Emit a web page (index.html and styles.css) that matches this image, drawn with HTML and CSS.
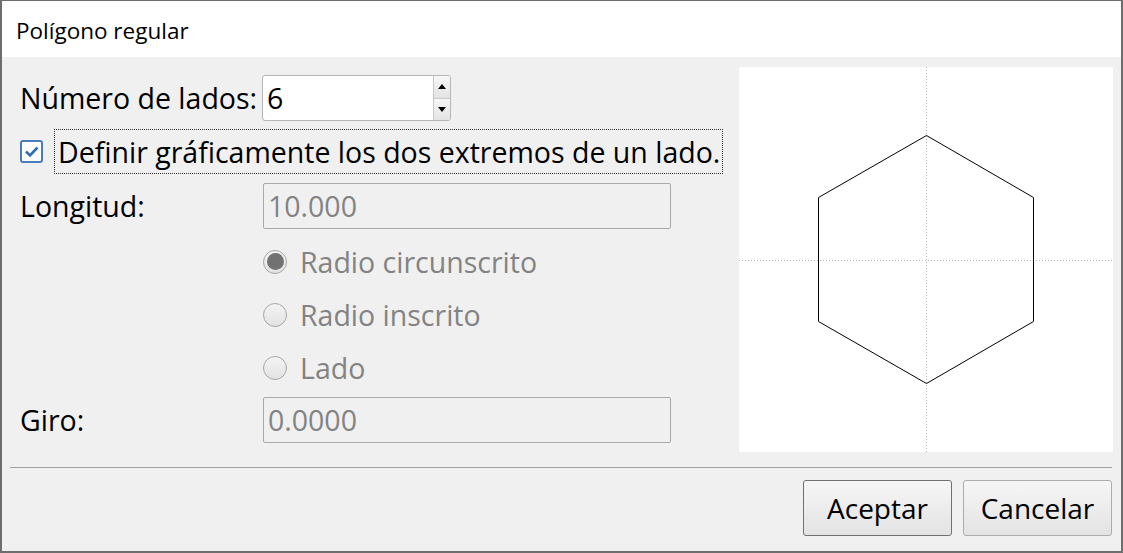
FILE: index.html
```html
<!DOCTYPE html>
<html lang="es">
<head>
    <meta charset="UTF-8">
    <title>Polígono regular</title>
    <link rel="stylesheet" href="styles.css">
</head>
<body>
    <div class="dialog">
        <div class="titlebar">Polígono regular</div>

        <div class="content">
            <div class="form">
                <div class="row row-sides">
                    <label class="label">Número de lados:</label>
                    <div class="spinner">
                        <span class="spinner-value">6</span>
                        <div class="spin-btns">
                            <div class="spin-btn"><span class="arrow-up"></span></div>
                            <div class="spin-btn"><span class="arrow-down"></span></div>
                        </div>
                    </div>
                </div>

                <div class="row row-check">
                    <span class="checkbox">
                        <svg width="19" height="19" viewBox="0 0 19 19"><path d="M4 9.5 L8 13.5 L15.5 5.5" fill="none" stroke="#2f6db5" stroke-width="2.6"/></svg>
                    </span>
                    <span class="check-label">Definir gráficamente los dos extremos de un lado.</span>
                </div>

                <div class="row row-field">
                    <label class="label col-label">Longitud:</label>
                    <div class="field disabled">10.000</div>
                </div>

                <div class="radios">
                    <div class="radio-row"><span class="radio checked"></span><span>Radio circunscrito</span></div>
                    <div class="radio-row"><span class="radio"></span><span>Radio inscrito</span></div>
                    <div class="radio-row"><span class="radio"></span><span>Lado</span></div>
                </div>

                <div class="row row-field">
                    <label class="label col-label">Giro:</label>
                    <div class="field disabled">0.0000</div>
                </div>
            </div>

            <div class="preview">
                <svg width="374" height="385" viewBox="0 0 374 385">
                    <line x1="187.5" y1="0" x2="187.5" y2="385" stroke="#b8b8b8" stroke-width="1" stroke-dasharray="1 2"/>
                    <line x1="0" y1="193.5" x2="374" y2="193.5" stroke="#b8b8b8" stroke-width="1" stroke-dasharray="1 2"/>
                    <polygon points="187.5,68.5 294.5,130.5 294.5,254.5 187.5,316.5 79.5,254.5 79.5,130.5" fill="none" stroke="#000" stroke-width="1"/>
                </svg>
            </div>
        </div>

        <div class="separator"></div>

        <div class="buttons">
            <button class="btn default">Aceptar</button>
            <button class="btn">Cancelar</button>
        </div>
    </div>
</body>
</html>
```

FILE: styles.css
```css
:root {
    --face: #f0f0f0;
    --frame: #6e6e6e;
    --disabled: #838383;
    --field-border: #a9a9a9;
}
html, body {
    margin: 0;
    padding: 0;
}
body {
    font-family: 'Open Sans', 'Noto Sans', sans-serif;
    color: #000;
    background: var(--face);
}
.dialog {
    box-sizing: border-box;
    width: 1123px;
    height: 553px;
    border: 2px solid var(--frame);
    border-top-width: 1px;
    background: var(--face);
    display: flex;
    flex-direction: column;
}
.titlebar {
    height: 56px;
    background: #fff;
    font-size: 22.5px;
    padding: 2px 0 0 14px;
    box-sizing: border-box;
    display: flex;
    align-items: center;
    flex-shrink: 0;
}
.content {
    display: flex;
    padding: 10px 8px 0 18px;
    height: 385px;
}
.form {
    width: 710px;
    padding-top: 8px;
    font-size: 28.5px;
}
.row {
    display: flex;
    align-items: center;
}
.row-sides {
    height: 46px;
    margin-bottom: 8px;
}
.label {
    white-space: nowrap;
}
.col-label {
    width: 243px;
    flex-shrink: 0;
}
.spinner {
    box-sizing: border-box;
    width: 189px;
    height: 46px;
    margin-left: 5px;
    border: 1px solid #b5b5b5;
    border-radius: 3px;
    background: #fff;
    display: flex;
    overflow: hidden;
}
.spinner-value {
    flex: 1;
    padding-left: 4px;
    display: flex;
    align-items: center;
}
.spin-btns {
    width: 16px;
    display: flex;
    flex-direction: column;
    border-left: 1px solid #c8c8c8;
}
.spin-btn {
    flex: 1;
    display: flex;
    align-items: center;
    justify-content: center;
    background: linear-gradient(#f7f7f7, #e3e3e3);
}
.spin-btn + .spin-btn {
    border-top: 1px solid #c8c8c8;
}
.arrow-up, .arrow-down {
    width: 0;
    height: 0;
    border-left: 4px solid transparent;
    border-right: 4px solid transparent;
}
.arrow-up {
    border-bottom: 5px solid #000;
}
.arrow-down {
    border-top: 5px solid #000;
}
.row-check {
    height: 45px;
    margin-bottom: 9px;
}
.checkbox {
    box-sizing: border-box;
    width: 23px;
    height: 23px;
    margin: 0 11px 0 0;
    border: 2px solid #4a7cb8;
    border-radius: 3px;
    background: #fff;
    display: flex;
    align-items: center;
    justify-content: center;
    flex-shrink: 0;
}
.check-label {
    box-sizing: border-box;
    height: 45px;
    border: 1px dotted #333;
    padding: 0 2px 0 3px;
    display: flex;
    align-items: center;
    white-space: nowrap;
}
.row-field {
    height: 46px;
}
.field {
    box-sizing: border-box;
    width: 408px;
    height: 46px;
    border: 1px solid var(--field-border);
    border-radius: 2px;
    padding-left: 4px;
    display: flex;
    align-items: center;
}
.disabled {
    color: var(--disabled);
}
.radios {
    padding: 6px 0 3px 243px;
    color: var(--disabled);
}
.radio-row {
    height: 53px;
    display: flex;
    align-items: center;
}
.radio {
    box-sizing: border-box;
    width: 24px;
    height: 24px;
    margin-right: 13px;
    border: 1px solid #a6a6a6;
    border-radius: 50%;
    background: linear-gradient(#f4f4f4, #e2e2e2);
    display: flex;
    align-items: center;
    justify-content: center;
    flex-shrink: 0;
}
.radio.checked::after {
    content: "";
    width: 17px;
    height: 17px;
    border-radius: 50%;
    background: #727272;
}
.preview {
    margin-left: auto;
    width: 374px;
    height: 385px;
    background: #fff;
    flex-shrink: 0;
}
.preview svg {
    display: block;
}
.separator {
    height: 1px;
    background: #a0a0a0;
    margin: 15px 9px 0 8px;
}
.buttons {
    display: flex;
    justify-content: flex-end;
    gap: 11px;
    padding: 12px 9px 0 0;
}
.btn {
    box-sizing: border-box;
    width: 149px;
    height: 56px;
    font-family: inherit;
    font-size: 28px;
    color: #000;
    border: 1px solid #acacac;
    border-radius: 3px;
    background: linear-gradient(#f6f6f6, #e3e3e3);
    padding: 0;
}
.btn.default {
    border-color: #707070;
}
```
